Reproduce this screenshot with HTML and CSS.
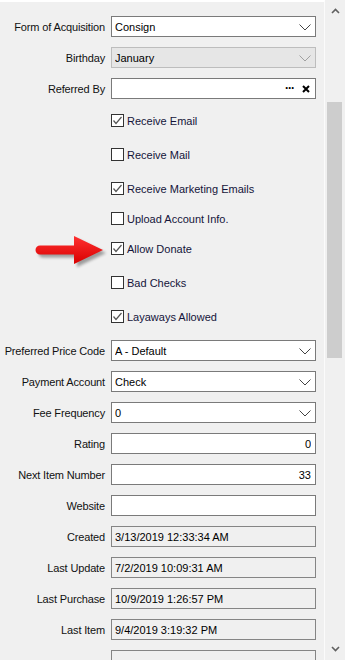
FILE: index.html
```html
<!DOCTYPE html>
<html>
<head>
<meta charset="utf-8">
<link rel="stylesheet" href="styles.css">
</head>
<body>
<div class="window">
  <div class="panel">
    <div class="form">
      <div class="row">
        <span class="lbl">Form of Acquisition</span>
        <div class="field combo"><span class="val">Consign</span><svg class="chev" width="12" height="7" viewBox="0 0 12 7"><polyline points="0.5,0.5 6,6 11.5,0.5" fill="none" stroke="#444" stroke-width="1"/></svg></div>
      </div>
      <div class="row">
        <span class="lbl">Birthday</span>
        <div class="field combo disabled"><span class="val">January</span><svg class="chev" width="12" height="7" viewBox="0 0 12 7"><polyline points="0.5,0.5 6,6 11.5,0.5" fill="none" stroke="#a0a0a0" stroke-width="1"/></svg></div>
      </div>
      <div class="row">
        <span class="lbl">Referred By</span>
        <div class="field lookup"><span class="val"></span><span class="dots">&middot;&middot;&middot;</span><svg class="clear" width="8" height="8" viewBox="0 0 8 8"><path d="M1,1 L7,7 M7,1 L1,7" stroke="#000" stroke-width="2"/></svg></div>
      </div>

      <div class="checks">
        <div class="check"><span class="box on"><svg width="11" height="11" viewBox="0 0 11 11"><polyline points="1.5,5.5 4,8.5 9.5,2" fill="none" stroke="#555" stroke-width="1.2"/></svg></span><span class="ctext">Receive Email</span></div>
        <div class="check"><span class="box"></span><span class="ctext">Receive Mail</span></div>
        <div class="check"><span class="box on"><svg width="11" height="11" viewBox="0 0 11 11"><polyline points="1.5,5.5 4,8.5 9.5,2" fill="none" stroke="#555" stroke-width="1.2"/></svg></span><span class="ctext">Receive Marketing Emails</span></div>
        <div class="check near"><span class="box"></span><span class="ctext">Upload Account Info.</span></div>
        <div class="check near"><span class="box on"><svg width="11" height="11" viewBox="0 0 11 11"><polyline points="1.5,5.5 4,8.5 9.5,2" fill="none" stroke="#555" stroke-width="1.2"/></svg></span><span class="ctext">Allow Donate</span></div>
        <div class="check"><span class="box"></span><span class="ctext">Bad Checks</span></div>
        <div class="check"><span class="box on"><svg width="11" height="11" viewBox="0 0 11 11"><polyline points="1.5,5.5 4,8.5 9.5,2" fill="none" stroke="#555" stroke-width="1.2"/></svg></span><span class="ctext">Layaways Allowed</span></div>
      </div>

      <div class="row">
        <span class="lbl">Preferred Price Code</span>
        <div class="field combo"><span class="val">A - Default</span><svg class="chev" width="12" height="7" viewBox="0 0 12 7"><polyline points="0.5,0.5 6,6 11.5,0.5" fill="none" stroke="#444" stroke-width="1"/></svg></div>
      </div>
      <div class="row">
        <span class="lbl">Payment Account</span>
        <div class="field combo"><span class="val">Check</span><svg class="chev" width="12" height="7" viewBox="0 0 12 7"><polyline points="0.5,0.5 6,6 11.5,0.5" fill="none" stroke="#444" stroke-width="1"/></svg></div>
      </div>
      <div class="row">
        <span class="lbl">Fee Frequency</span>
        <div class="field combo"><span class="val">0</span><svg class="chev" width="12" height="7" viewBox="0 0 12 7"><polyline points="0.5,0.5 6,6 11.5,0.5" fill="none" stroke="#444" stroke-width="1"/></svg></div>
      </div>
      <div class="row">
        <span class="lbl">Rating</span>
        <div class="field num"><span class="val">0</span></div>
      </div>
      <div class="row">
        <span class="lbl">Next Item Number</span>
        <div class="field num"><span class="val">33</span></div>
      </div>
      <div class="row">
        <span class="lbl">Website</span>
        <div class="field"><span class="val"></span></div>
      </div>
      <div class="row">
        <span class="lbl">Created</span>
        <div class="field readonly"><span class="val">3/13/2019 12:33:34 AM</span></div>
      </div>
      <div class="row">
        <span class="lbl">Last Update</span>
        <div class="field readonly"><span class="val">7/2/2019 10:09:31 AM</span></div>
      </div>
      <div class="row">
        <span class="lbl">Last Purchase</span>
        <div class="field readonly"><span class="val">10/9/2019 1:26:57 PM</span></div>
      </div>
      <div class="row">
        <span class="lbl">Last Item</span>
        <div class="field readonly"><span class="val">9/4/2019 3:19:32 PM</span></div>
      </div>
      <div class="row">
        <span class="lbl"></span>
        <div class="field readonly"><span class="val"></span></div>
      </div>
    </div>

    <svg class="arrow" width="76" height="36" viewBox="0 0 76 36">
      <defs>
        <linearGradient id="rg" x1="0" y1="0" x2="0" y2="1">
          <stop offset="0" stop-color="#ff3030"/>
          <stop offset="1" stop-color="#d80000"/>
        </linearGradient>
        <filter id="sh" x="-20%" y="-30%" width="140%" height="160%">
          <feGaussianBlur stdDeviation="1.6"/>
        </filter>
      </defs>
      <g transform="translate(3,3)" fill="#000" opacity="0.35" filter="url(#sh)">
        <path d="M6,10.5 L40,10.5 L40,1 L69,15 L40,29 L40,19.5 L6,19.5 A4.5,4.5 0 0 1 6,10.5 Z"/>
      </g>
      <path d="M6,10.5 L40,10.5 L40,1 L69,15 L40,29 L40,19.5 L6,19.5 A4.5,4.5 0 0 1 6,10.5 Z" fill="url(#rg)"/>
    </svg>
  </div>

  <div class="scrollbar">
    <div class="sb-btn"><svg width="9" height="6" viewBox="0 0 9 6"><polyline points="1,5 4.5,1.5 8,5" fill="none" stroke="#606060" stroke-width="1.6"/></svg></div>
    <div class="sb-track"><div class="sb-thumb"></div></div>
    <div class="sb-btn"><svg width="9" height="6" viewBox="0 0 9 6"><polyline points="1,1 4.5,4.5 8,1" fill="none" stroke="#606060" stroke-width="1.6"/></svg></div>
  </div>
</div>
</body>
</html>
```

FILE: styles.css
```css
html, body {
  margin: 0;
  padding: 0;
  background: #f0f0f0;
}

body {
  font-family: "Liberation Sans", Arial, sans-serif;
  font-size: 11px;
  color: #000;
}

.window {
  display: flex;
  width: 345px;
  height: 660px;
  overflow: hidden;
}

.panel {
  position: relative;
  width: 325px;
  flex: none;
  box-sizing: border-box;
  border-top: 2px solid #ffffff;
  border-right: 1px solid #fbfbfb;
  padding-top: 14px;
}

.form {
  display: flex;
  flex-direction: column;
}

.row {
  display: flex;
  align-items: center;
  height: 21px;
  flex: none;
}

.row + .row {
  margin-top: 10px;
}

.lbl {
  width: 105px;
  flex: none;
  text-align: right;
  white-space: nowrap;
  margin-right: 6px;
  color: #111;
  letter-spacing: -0.15px;
}

.field {
  width: 205px;
  height: 21px;
  box-sizing: border-box;
  border: 1px solid #7a7a7a;
  background: #ffffff;
  display: flex;
  align-items: center;
  padding: 0 4px 0 3px;
  flex: none;
}

.val {
  flex: 1;
  white-space: nowrap;
  overflow: hidden;
  color: #000;
}

.field.num .val {
  text-align: right;
}

.field.disabled {
  background: #e6e6e6;
  border-color: #bdbdbd;
}

.field.readonly {
  background: #f0f0f0;
  border-color: #858585;
}

.chev {
  flex: none;
  margin-top: 1px;
}

.dots {
  font-weight: bold;
  font-size: 12px;
  letter-spacing: -1px;
  margin-right: 8px;
  margin-top: -2px;
}

.clear {
  flex: none;
  margin-right: 1px;
}

.checks {
  display: flex;
  flex-direction: column;
  padding-left: 111px;
  margin-top: 15px;
  margin-bottom: 17px;
}

.check {
  display: flex;
  align-items: center;
  height: 13px;
}

.check + .check {
  margin-top: 21px;
}

.check.near {
  margin-top: 17px;
}

.box {
  width: 13px;
  height: 13px;
  box-sizing: border-box;
  border: 1px solid #333333;
  background: #ffffff;
  flex: none;
  display: flex;
  align-items: center;
  justify-content: center;
}

.ctext {
  margin-left: 3px;
  color: #14143a;
  white-space: nowrap;
}

.arrow {
  position: absolute;
  left: 34px;
  top: 233px;
}

.scrollbar {
  width: 20px;
  flex: none;
  display: flex;
  flex-direction: column;
  background: #f0f0f0;
}

.sb-btn {
  height: 22px;
  flex: none;
  display: flex;
  align-items: center;
  justify-content: center;
}

.sb-track {
  flex: 1;
  padding-top: 80px;
  padding-left: 2px;
}

.sb-thumb {
  width: 15px;
  height: 256px;
  background: #cdcdcd;
}
```
